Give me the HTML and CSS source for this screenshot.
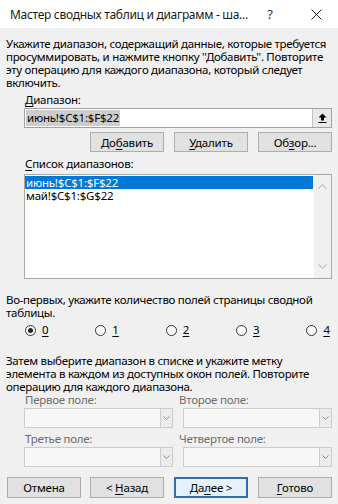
FILE: index.html
```html
<!DOCTYPE html>
<html lang="ru">
<head>
  <meta charset="UTF-8" />
  <title>Мастер сводных таблиц и диаграмм</title>
  <link rel="stylesheet" href="styles.css">
</head>
<body>

  <div class="dialog">
    <div class="titlebar">
      <span class="title">Мастер сводных таблиц и диаграмм - ша...</span>
      <span class="help">?</span>
      <svg class="close" width="11" height="11" viewBox="0 0 11 11">
        <path d="M0.5 0.5 L10.5 10.5 M10.5 0.5 L0.5 10.5" stroke="#222" stroke-width="1" fill="none" />
      </svg>
    </div>

    <div class="content">
      <p class="text intro">Укажите диапазон, содержащий данные, которые требуется<br>просуммировать, и нажмите кнопку ''Добавить''. Повторите<br>эту операцию для каждого диапазона, который следует<br>включить.</p>

      <div class="group">
        <div class="label"><u>Д</u>иапазон:</div>
        <div class="range-input">
          <span class="range-value"><span class="sel">июнь!$C$1:$F$22</span></span>
          <span class="collapse">
            <svg width="9" height="10" viewBox="0 0 9 10">
              <path d="M4.5 0.5 L8.5 4.5 H6 V7.5 H3 V4.5 H0.5 Z" fill="#000" />
              <path d="M0.5 9.5 H8.5" stroke="#000" stroke-width="1" />
            </svg>
          </span>
        </div>

        <div class="btn-row">
          <button class="btn">До<u>б</u>авить</button>
          <button class="btn"><u>У</u>далить</button>
          <button class="btn">Об<u>з</u>ор...</button>
        </div>

        <div class="label list-label"><u>С</u>писок диапазонов:</div>
        <div class="listbox">
          <div class="items">
            <div class="item selected">июнь!$C$1:$F$22</div>
            <div class="item">май!$C$1:$G$22</div>
          </div>
          <div class="scrollbar">
            <svg width="9" height="5" viewBox="0 0 9 5"><path d="M0.5 4.5 L4.5 0.8 L8.5 4.5" stroke="#a6a6a6" fill="none" /></svg>
            <svg width="9" height="5" viewBox="0 0 9 5"><path d="M0.5 0.5 L4.5 4.2 L8.5 0.5" stroke="#a6a6a6" fill="none" /></svg>
          </div>
        </div>
      </div>

      <p class="text pages">Во-первых, укажите количество полей страницы сводной<br>таблицы.</p>

      <div class="radios">
        <label class="radio"><span class="circle checked"></span><u>0</u></label>
        <label class="radio"><span class="circle"></span><u>1</u></label>
        <label class="radio"><span class="circle"></span><u>2</u></label>
        <label class="radio"><span class="circle"></span><u>3</u></label>
        <label class="radio"><span class="circle"></span><u>4</u></label>
      </div>

      <p class="text step2">Затем выберите диапазон в списке и укажите метку<br>элемента в каждом из доступных окон полей. Повторите<br>операцию для каждого диапазона.</p>

      <div class="fields">
        <div class="field">
          <div class="label muted">Первое поле:</div>
          <div class="combo"><span class="drop"><svg width="7" height="4" viewBox="0 0 7 4"><path d="M0.5 0.5 L3.5 3.5 L6.5 0.5" stroke="#8a8a8a" fill="none" /></svg></span></div>
        </div>
        <div class="field right">
          <div class="label muted">Второе поле:</div>
          <div class="combo"><span class="drop"><svg width="7" height="4" viewBox="0 0 7 4"><path d="M0.5 0.5 L3.5 3.5 L6.5 0.5" stroke="#8a8a8a" fill="none" /></svg></span></div>
        </div>
        <div class="field">
          <div class="label muted">Третье поле:</div>
          <div class="combo"><span class="drop"><svg width="7" height="4" viewBox="0 0 7 4"><path d="M0.5 0.5 L3.5 3.5 L6.5 0.5" stroke="#8a8a8a" fill="none" /></svg></span></div>
        </div>
        <div class="field right">
          <div class="label muted">Четвертое поле:</div>
          <div class="combo"><span class="drop"><svg width="7" height="4" viewBox="0 0 7 4"><path d="M0.5 0.5 L3.5 3.5 L6.5 0.5" stroke="#8a8a8a" fill="none" /></svg></span></div>
        </div>
      </div>
    </div>

    <div class="footer">
      <button class="btn">Отмена</button>
      <div class="nav">
        <button class="btn">&lt; <u>Н</u>азад</button>
        <button class="btn default">Да<u>л</u>ее &gt;</button>
        <button class="btn"><u>Г</u>отово</button>
      </div>
    </div>
  </div>

</body>
</html>
```

FILE: styles.css
```css
* {
  box-sizing: border-box;
}
body {
  margin: 0;
  font-family: 'Noto Sans', 'Open Sans', sans-serif;
  font-size: 11.5px;
  color: #000;
  background: #f0f0f0;
}
u {
  text-decoration-thickness: 1px;
  text-underline-offset: 2px;
}
.dialog {
  width: 338px;
  height: 504px;
  display: flex;
  flex-direction: column;
  background: #f0f0f0;
}
.titlebar {
  height: 28px;
  background: #fff;
  display: flex;
  align-items: center;
  padding: 0 16px 0 10px;
  font-size: 12px;
  color: #1a1a1a;
}
.title {
  flex: 1;
  min-width: 0;
  white-space: nowrap;
  overflow: hidden;
  letter-spacing: -0.3px;
}
.help {
  flex-shrink: 0;
  width: 14px;
  text-align: center;
  margin-right: 34px;
  font-size: 13px;
  color: #333;
}
.close {
  flex-shrink: 0;
}
.content {
  padding: 9px 6px 0 6px;
}
.text {
  margin: 0;
  line-height: 13px;
  white-space: nowrap;
  letter-spacing: -0.3px;
}
.group {
  margin-left: 18px;
}
.label {
  line-height: 13px;
  padding-left: 1px;
  margin-top: 4px;
  letter-spacing: -0.25px;
}
.range-input {
  margin-top: 2px;
  height: 20px;
  display: flex;
  background: #fff;
  border: 1px solid #a2a2a2;
}
.range-value {
  flex: 1;
  padding: 1px 0 1px 1px;
  display: flex;
}
.sel {
  background: #cdcdcd;
  padding: 0 1px;
  line-height: 16px;
  letter-spacing: -0.2px;
}
.collapse {
  width: 19px;
  margin: 0;
  background: #e9e9e9;
  border-left: 1px solid #c4c4c4;
  display: flex;
  align-items: center;
  justify-content: center;
}
.btn-row {
  margin-top: 4px;
  display: flex;
  justify-content: flex-end;
  gap: 10px;
}
.btn {
  width: 74px;
  height: 20px;
  padding: 0;
  font-family: inherit;
  font-size: 11.5px;
  color: #000;
  background: #e1e1e1;
  border: 1px solid #adadad;
  letter-spacing: -0.2px;
}
.btn.default {
  background: #e5f1fb;
  border: 2px solid #2e6fb0;
}
.list-label {
  margin-top: 5px;
}
.listbox {
  margin-top: 4px;
  height: 105px;
  display: flex;
  background: #fff;
  border: 1px solid #a8a8a8;
}
.items {
  flex: 1;
  padding: 1px 1px 0 0;
}
.item {
  height: 13px;
  line-height: 13px;
  padding-left: 1px;
  letter-spacing: -0.2px;
}
.item.selected {
  background: #0078d7;
  color: #fff;
}
.scrollbar {
  width: 17px;
  background: #f0f0f0;
  display: flex;
  flex-direction: column;
  justify-content: space-between;
  align-items: center;
  padding: 9px 0 9px;
}
.pages {
  margin-top: 14px;
}
.radios {
  margin: 4px 2px 0 19px;
  height: 14px;
  display: flex;
  justify-content: space-between;
  align-items: center;
}
.radio {
  display: flex;
  align-items: center;
  gap: 6px;
  line-height: 14px;
}
.circle {
  width: 11px;
  height: 11px;
  border-radius: 50%;
  border: 1px solid #333;
  background: #fff;
  display: flex;
  align-items: center;
  justify-content: center;
}
.circle.checked::after {
  content: '';
  width: 5px;
  height: 5px;
  border-radius: 50%;
  background: #222;
}
.step2 {
  margin-top: 17px;
}
.fields {
  margin-left: 18px;
  display: grid;
  grid-template-columns: 149px 149px;
  column-gap: 10px;
}
.field .label {
  margin-top: 0;
}
.field:nth-child(3) .label,
.field:nth-child(4) .label {
  margin-top: 4px;
}
.field.right .label {
  margin-left: -5px;
}
.muted {
  color: #6d6d6d;
}
.combo {
  margin-top: 2px;
  height: 20px;
  background: #f7f7f7;
  border: 1px solid #cccccc;
  display: flex;
  justify-content: flex-end;
}
.drop {
  width: 12px;
  background: #ececec;
  border-left: 1px solid #cccccc;
  display: flex;
  align-items: center;
  justify-content: center;
}
.footer {
  margin-top: auto;
  padding: 0 6px 6px 7px;
  display: flex;
  justify-content: space-between;
}
.footer .btn {
  height: 21px;
}
.nav {
  display: flex;
  gap: 10px;
}
```
